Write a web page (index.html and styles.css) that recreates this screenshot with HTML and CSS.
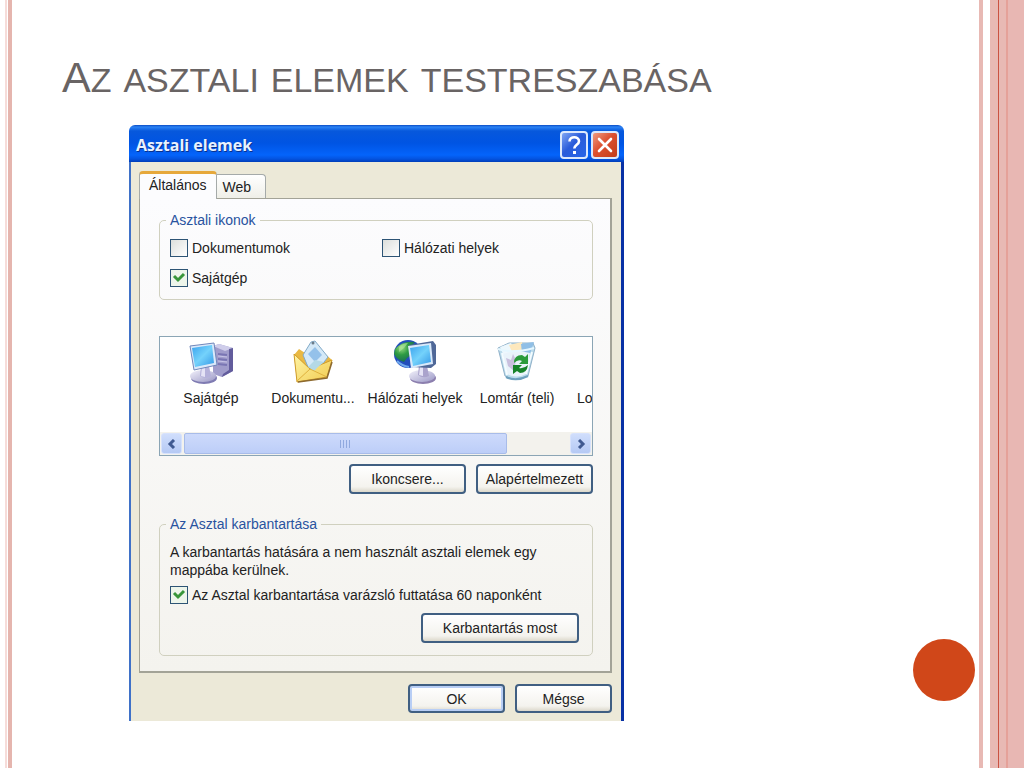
FILE: index.html
```html
<!DOCTYPE html>
<html lang="hu">

<head>
    <meta charset="UTF-8">
    <meta name="viewport" content="width=device-width, initial-scale=1.0">
    <title>Az asztali elemek testreszabása</title>
    <link rel="stylesheet" href="styles.css">
</head>

<body>
    <div class="slide">
        <div class="stripes-left"></div>

        <main class="content">
            <h1 class="slide-title">A<span>z</span> <span>asztali</span> <span>elemek</span> <span>testreszabása</span></h1>

            <section class="dialog">
                <header class="titlebar">
                    <h2>Asztali elemek</h2>
                    <button type="button" class="caption-btn" aria-label="Súgó">
                        <svg viewBox="0 0 24 24" width="24" height="24">
                            <path d="M7.5 8.5C7.5 2.8 17 2.8 17 8.2C17 11.8 12.3 11.6 12.3 15.5" fill="none" stroke="#fff" stroke-width="2.6" />
                            <rect x="11" y="18" width="3" height="3" fill="#fff" />
                        </svg>
                    </button>
                    <button type="button" class="caption-btn close" aria-label="Bezárás">
                        <svg viewBox="0 0 24 24" width="24" height="24">
                            <path d="M6 6L18 18M18 6L6 18" stroke="#fff" stroke-width="2.6" stroke-linecap="round" />
                        </svg>
                    </button>
                </header>

                <div class="dialog-body">
                    <div class="tabs">
                        <button type="button" class="tab active">Általános</button>
                        <button type="button" class="tab">Web</button>
                    </div>

                    <div class="panel">
                        <!-- Desktop icons -->
                        <fieldset class="group">
                            <legend>Asztali ikonok</legend>
                            <div class="checks">
                                <label class="check"><input type="checkbox">Dokumentumok</label>
                                <label class="check"><input type="checkbox">Hálózati helyek</label>
                                <label class="check"><input type="checkbox" checked>Sajátgép</label>
                            </div>
                        </fieldset>

                        <!-- Icon list -->
                        <div class="icon-list">
                            <ul class="icons">
                                <li>
                                    <svg viewBox="0 0 46 44" width="46" height="44">
                                        <defs>
                                            <linearGradient id="screen" x1="0" y1="0" x2="1" y2="1">
                                                <stop offset="0" stop-color="#3aa2ee" />
                                                <stop offset=".5" stop-color="#74d2fb" />
                                                <stop offset="1" stop-color="#3497e6" />
                                            </linearGradient>
                                            <linearGradient id="base" x1="0" y1="0" x2="1" y2="1">
                                                <stop offset="0" stop-color="#f3f2fb" />
                                                <stop offset="1" stop-color="#9b98c6" />
                                            </linearGradient>
                                        </defs>
                                        <path d="M25 6L31 4L45 8V31L34 37L25 34Z" fill="#a09ccb" />
                                        <path d="M25 6L31 4L45 8L37 11Z" fill="#cfcdea" />
                                        <path d="M41 9L45 8V31L34 37L35 34L41 30Z" fill="#625c9c" />
                                        <path d="M30 14L39 15M30 19L39 20M30 24L39 25" stroke="#7a76b4" stroke-width="2" />
                                        <path d="M30 16L39 17M30 21L39 22" stroke="#c6c3e6" />
                                        <ellipse cx="16" cy="38" rx="13" ry="6" fill="#7f7bb2" />
                                        <ellipse cx="15" cy="36" rx="13" ry="6" fill="url(#base)" />
                                        <path d="M13 26L21 26L23 36Q18 40 12 36Z" fill="#b5b1da" />
                                        <path d="M14 27L17 27L17 37L13 36Z" fill="#e5e3f5" />
                                        <path d="M2 6L26 3L29 25L6 30Z" fill="#dbe9fa" stroke="#7187bb" />
                                        <path d="M4 8L24 5L26 23L7 27Z" fill="url(#screen)" />
                                    </svg>
                                    <span>Sajátgép</span>
                                </li>
                                <li>
                                    <svg viewBox="0 0 46 44" width="46" height="44">
                                        <defs>
                                            <linearGradient id="folder" x1="0" y1="0" x2="1" y2="1">
                                                <stop offset="0" stop-color="#fff5a6" />
                                                <stop offset="1" stop-color="#f1cb50" />
                                            </linearGradient>
                                        </defs>
                                        <path d="M4 15L9 9L15 13L34 13L42 20L37 37L7 42Z" fill="#eab943" />
                                        <path d="M13 15L21 2L25 1L38 17L27 31L18 27Z" fill="#d4e9f8" stroke="#82aac8" />
                                        <path d="M18 14L25 7L32 15L25 22Z" fill="#94c1ea" />
                                        <circle cx="23" cy="3" r="1.5" fill="#6b7c8a" />
                                        <path d="M4 14L20 29L42 20L37 37L7 42Z" fill="url(#folder)" stroke="#cf9c2b" />
                                        <path d="M18 27L25 20L34 22L28 27L24 31Z" fill="#b4d9e6" />
                                        <path d="M7 41L20 29L37 37" fill="none" stroke="#dfb13d" />
                                        <path d="M8 42L37 38L42 22" fill="none" stroke="#8d6a2f" stroke-width="1.5" />
                                    </svg>
                                    <span>Dokumentu...</span>
                                </li>
                                <li>
                                    <svg viewBox="0 0 46 44" width="46" height="44">
                                        <defs>
                                            <radialGradient id="globe" cx=".35" cy=".3" r=".7">
                                                <stop offset="0" stop-color="#9cdd83" />
                                                <stop offset=".5" stop-color="#2e9b43" />
                                                <stop offset="1" stop-color="#1a6f55" />
                                            </radialGradient>
                                        </defs>
                                        <circle cx="16" cy="14" r="14" fill="#234ebb" />
                                        <path d="M3 9Q11 0 23 2L18 8L22 13L15 18L12 22Q5 20 2 14Z" fill="url(#globe)" />
                                        <path d="M7 7Q11 3 16 3L12 8L7 12Z" fill="#b6e8a0" opacity=".6" />
                                        <path d="M5 21Q10 26 17 27" fill="none" stroke="#6fa9ee" stroke-width="2" />
                                        <ellipse cx="31" cy="38" rx="13" ry="6" fill="#8c7fae" />
                                        <ellipse cx="30" cy="36" rx="13" ry="6" fill="url(#base)" />
                                        <path d="M27 25L35 26L37 36Q31 39 26 35Z" fill="#aaa3cc" />
                                        <path d="M28 27H31V36L27 35Z" fill="#e5e3f5" />
                                        <path d="M17 5L41 1L44 5L44 24L39 28L19 27Z" fill="#506898" />
                                        <path d="M16 6L39 3L41 24L19 28Z" fill="#d9e9fa" />
                                        <path d="M18 8L37 5L39 22L21 26Z" fill="url(#screen)" />
                                    </svg>
                                    <span>Hálózati helyek</span>
                                </li>
                                <li>
                                    <svg viewBox="0 0 46 44" width="46" height="44">
                                        <path d="M4 8L15 3L39 3L41 8L34 36Q22 43 11 36Z" fill="#bcdcec" stroke="#8fb0c8" />
                                        <path d="M6 7L17 3L22 13L11 18Z" fill="#eef8fd" />
                                        <path d="M15 5L28 2L29 11L19 14Z" fill="#fde8bd" />
                                        <path d="M27 4L40 2L36 14L28 13Z" fill="#90bfe6" />
                                        <path d="M9 14L21 10L36 13L32 34Q22 39 13 34Z" fill="#e9f3fa" />
                                        <path d="M12 18L17 20L19 14L22 20L20 31L14 26Z" fill="#c9c0de" />
                                        <path d="M4 9Q18 14 40 8" fill="none" stroke="#e5f7ff" stroke-width="2" />
                                        <path d="M8 13L13 35M38 12L32 34" stroke="#f4fcff" stroke-width="2" />
                                        <path d="M12 37Q22 42 34 36" fill="none" stroke="#6ea0bd" stroke-width="2" />
                                        <path d="M20 23Q20 15 28 15L31 17L34 14V24H25L28 21Q24 19 20 23Z" fill="#2b9b3b" />
                                        <path d="M34 25Q33 33 26 33L23 31L19 34V25H28L25 28Q30 29 34 25Z" fill="#168329" />
                                    </svg>
                                    <span>Lomtár (teli)</span>
                                </li>
                                <li>
                                    <svg viewBox="0 0 46 44" width="46" height="44"></svg>
                                    <span>Lomtár (üres)</span>
                                </li>
                            </ul>
                            <div class="scrollbar">
                                <button type="button" class="arrow" aria-label="Balra">
                                    <svg viewBox="0 0 10 10" width="10" height="10"><path d="M7 1L3 5L7 9" /></svg>
                                </button>
                                <div class="track">
                                    <div class="thumb"><i></i><i></i><i></i><i></i></div>
                                </div>
                                <button type="button" class="arrow" aria-label="Jobbra">
                                    <svg viewBox="0 0 10 10" width="10" height="10"><path d="M3 1L7 5L3 9" /></svg>
                                </button>
                            </div>
                        </div>

                        <div class="buttons">
                            <button type="button" class="btn">Ikoncsere...</button>
                            <button type="button" class="btn">Alapértelmezett</button>
                        </div>

                        <!-- Desktop cleanup -->
                        <fieldset class="group cleanup">
                            <legend>Az Asztal karbantartása</legend>
                            <p>A karbantartás hatására a nem használt asztali elemek egy mappába kerülnek.</p>
                            <label class="check"><input type="checkbox" checked>Az Asztal karbantartása varázsló futtatása 60 naponként</label>
                            <button type="button" class="btn wide">Karbantartás most</button>
                        </fieldset>
                    </div>

                    <footer class="actions">
                        <button type="button" class="btn default">OK</button>
                        <button type="button" class="btn">Mégse</button>
                    </footer>
                </div>
            </section>
        </main>

        <div class="stripes-right"></div>
        <div class="dot"></div>
    </div>
</body>

</html>
```
FILE: styles.css
```css
* {
    box-sizing: border-box;
}

body {
    margin: 0;
    background-color: #fff;
    font-family: "Liberation Sans", Arial, sans-serif;
    font-size: 14px;
    line-height: 18px;
    color: #222;
}

button {
    font: inherit;
    color: inherit;
    padding: 0;
}

/* Slide frame */
.slide {
    position: relative;
    display: flex;
    min-height: 100vh;
}

.stripes-left {
    flex: none;
    width: 12px;
    background: linear-gradient(to right, #fff 5px, #f6dcd9 5px, #f6dcd9 7px, #fff 7px, #fff 8px, #e5b5ae 8px);
}

.stripes-right {
    flex: none;
    width: 45px;
    background: linear-gradient(to right, #e8b9b4 4px, #fff 4px, #fff 11px, #e8b9b4 11px, #e8b9b4 19px, #ca5242 19px, #ca5242 20px, #e8b9b4 20px, #e8b9b4 27px, #e5a199 27px, #e5a199 29px, #e8b7b3 29px);
}

.dot {
    position: absolute;
    right: 49px;
    bottom: 67px;
    width: 62px;
    height: 62px;
    border-radius: 50%;
    background-color: #d04719;
}

.content {
    flex: 1;
    min-width: 0;
    padding: 52px 48px 46px 50px;
}

.slide-title {
    margin: 0 0 23px;
    font-size: 43px;
    line-height: 50px;
    font-weight: normal;
    color: #696464;
}

/* Small capitals */
.slide-title span {
    font-size: 34px;
    line-height: 34px;
    text-transform: uppercase;
}

/* Dialog window */
.dialog {
    max-width: 495px;
    margin-left: 67px;
    border-radius: 6px 6px 0 0;
    overflow: hidden;
}

.titlebar {
    display: flex;
    align-items: center;
    gap: 3px;
    height: 37px;
    padding: 2px 5px 0 7px;
    background: linear-gradient(#0a4bc4, #2c83f5 2px, #0758dc 6px, #0054e3 18px, #0464fb 30px, #0453df 34px, #003db8);
}

.titlebar h2 {
    flex: 1;
    margin: 0;
    font-family: "Open Sans", sans-serif;
    font-size: 16px;
    font-weight: bold;
    color: #e8f2ff;
    text-shadow: 1px 1px #0a318c;
}

.caption-btn {
    display: flex;
    align-items: center;
    justify-content: center;
    width: 28px;
    height: 28px;
    border: 2px solid #dce8fc;
    border-radius: 4px;
    background: linear-gradient(135deg, #7fa5f4, #2a5cda 45%, #2765e8);
}

.caption-btn.close {
    background: linear-gradient(135deg, #ef9c82, #dc5030 45%, #c33c19);
}

.dialog-body {
    padding: 9px 9px 8px 8px;
    border-left: 2px solid #3f71c8;
    border-right: 3px solid #0831a5;
    background-color: #ece9d8;
}

.tabs {
    display: flex;
    align-items: flex-end;
}

.tab {
    height: 24px;
    padding: 0 14px 0 6px;
    border: 1px solid #a5aaa9;
    border-left: 0;
    border-bottom: 0;
    border-radius: 0 4px 0 0;
    background: linear-gradient(#fff, #efefe8);
}

.tab.active {
    height: 28px;
    margin-bottom: -1px;
    padding: 0 9px 3px;
    border: 1px solid #a5aaa9;
    border-top: 3px solid #e6a83b;
    border-bottom: 0;
    border-radius: 4px 4px 0 0;
    background: #fcfcfe;
}

.panel {
    padding: 12px 17px 15px 19px;
    border: 1px solid #a3a397;
    border-right-width: 2px;
    border-bottom-width: 2px;
    background: linear-gradient(#fcfcfe, #f4f3ee);
}

.group {
    min-width: 0;
    margin: 0;
    padding: 10px 10px 12px;
    border: 1px solid #d0d0bf;
    border-radius: 5px;
}

.group legend {
    margin-left: -4px;
    padding: 0 4px;
    color: #29539f;
}

.group p {
    margin: 0 0 7px;
}

.checks {
    display: grid;
    grid-template-columns: 1fr 1fr;
    gap: 12px;
}

.check {
    display: flex;
    align-items: center;
    gap: 4px;
}

.check input {
    appearance: none;
    flex: none;
    width: 18px;
    height: 18px;
    margin: 0;
    border: 1px solid #2d5475;
    background: linear-gradient(135deg, #dcdfdc, #fff);
}

.check input:checked {
    background: url("data:image/svg+xml,%3Csvg xmlns='http://www.w3.org/2000/svg' viewBox='0 0 16 16'%3E%3Cpath d='M3 6L7 10L13 4' fill='none' stroke='%2338963a' stroke-width='3'/%3E%3C/svg%3E"), #edf5eb;
}

/* Icon list */
.icon-list {
    margin-top: 36px;
    border: 1px solid #8ba5b5;
    background-color: #fff;
}

.icons {
    display: flex;
    height: 95px;
    margin: 0;
    padding: 3px 0 0;
    list-style: none;
    overflow: hidden;
}

.icons li {
    display: flex;
    flex: none;
    flex-direction: column;
    align-items: center;
    gap: 5px;
    width: 102px;
}

.scrollbar {
    display: flex;
    gap: 2px;
    height: 23px;
    padding: 1px;
    background-color: #f3f2ed;
}

.arrow {
    display: flex;
    align-items: center;
    justify-content: center;
    width: 21px;
    border: 1px solid #d7e2fc;
    border-radius: 3px;
    background: linear-gradient(#d0defc, #b5c9f4);
}

.arrow path {
    fill: none;
    stroke: #405a91;
    stroke-width: 3;
}

.track {
    flex: 1;
}

.thumb {
    display: flex;
    align-items: center;
    justify-content: center;
    gap: 2px;
    width: 84%;
    height: 100%;
    border: 1px solid #a8bce9;
    border-radius: 2px;
    background: linear-gradient(#cddafb, #bdcef8);
}

.thumb i {
    width: 1px;
    height: 8px;
    background-color: #90a9df;
}

/* Buttons */
.buttons,
.actions {
    display: flex;
    justify-content: flex-end;
    gap: 10px;
}

.buttons {
    margin: 8px 0 21px;
}

.btn {
    width: 117px;
    height: 30px;
    border: 2px solid #405f82;
    border-radius: 4px;
    background: linear-gradient(#fff, #f4f3ee 80%, #dcd8cb);
}

.btn.wide {
    display: block;
    width: 158px;
    margin: 9px 3px 0 auto;
}

.actions {
    padding-top: 11px;
}

.actions .btn {
    width: 97px;
    height: 29px;
}

.btn.default {
    box-shadow: inset 0 0 0 2px #b8cef5;
}
```
